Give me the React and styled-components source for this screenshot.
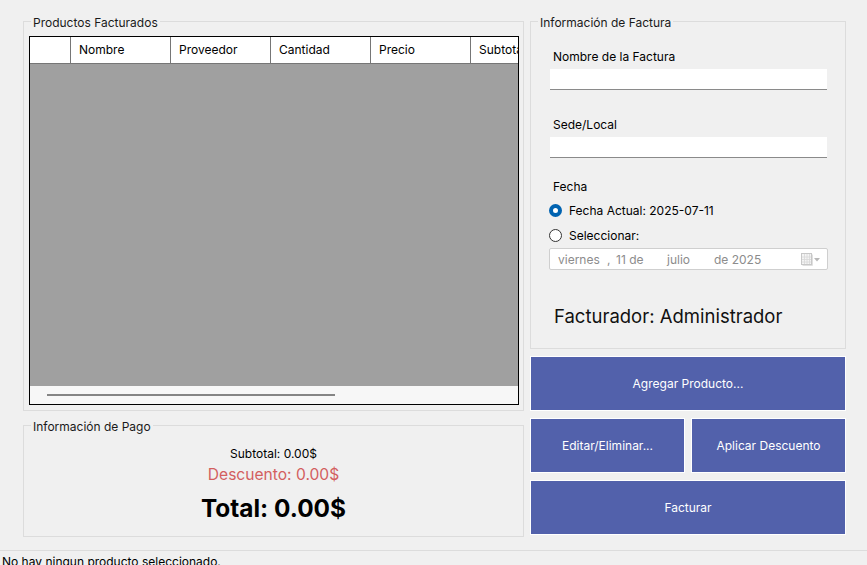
import styled, { createGlobalStyle } from 'styled-components'

const GlobalStyle = createGlobalStyle`
  html, body {
    margin: 0;
    padding: 0;
    background: #f0f0f0;
    overflow: hidden;
  }
  body {
    font-family: Inter, "Noto Sans", sans-serif;
    font-size: 12px;
    color: #1a1a1a;
  }
`

const Window = styled.div`
  width: 867px;
  height: 565px;
  display: flex;
  flex-direction: column;
  background: #f0f0f0;
`

const Main = styled.div`
  height: 550px;
  box-sizing: border-box;
  padding: 14px 21px 13px 23px;
  display: flex;
  gap: 6px;
`

const Column = styled.div`
  width: ${({ $w }) => $w}px;
  display: flex;
  flex-direction: column;
  gap: ${({ $gap }) => $gap}px;
`

const Group = styled.fieldset`
  margin: 0;
  padding: 0;
  min-width: 0;
  box-sizing: border-box;
  height: ${({ $h }) => $h}px;
  border: 1px solid #dcdcdc;
`

const Legend = styled.legend`
  padding: 0 2px;
  margin-left: 7px;
  font-size: 12px;
  line-height: 14px;
  color: #1a1a1a;

  span {
    position: relative;
    top: 2px;
  }
`

const GroupBody = styled.div`
  padding: ${({ $pad }) => $pad};
  display: flex;
  flex-direction: column;
`

const Table = styled.div`
  height: 369px;
  box-sizing: border-box;
  border: 1px solid #000;
  display: flex;
  flex-direction: column;
  overflow: hidden;
`

const HeaderRow = styled.div`
  display: grid;
  grid-template-columns: 40px repeat(5, 100px);
  height: 27px;
  flex-shrink: 0;
  box-sizing: border-box;
  border-bottom: 1px solid #767676;
  background: #fff;
`

const HeaderCell = styled.div`
  box-sizing: border-box;
  border-left: ${({ $first }) => ($first ? 'none' : '1px solid #767676')};
  padding-left: 8px;
  line-height: 26px;
  white-space: nowrap;
  overflow: hidden;
  color: #000;
`

const TableBody = styled.div`
  flex: 1;
  background: #a0a0a0;
`

const HScroll = styled.div`
  height: 18px;
  flex-shrink: 0;
  background: #f7f7f7;
  display: flex;
  align-items: center;
  padding-left: 17px;
`

const Thumb = styled.div`
  width: 288px;
  height: 2px;
  background: #858585;
`

const Totals = styled.div`
  display: flex;
  flex-direction: column;
  align-items: center;
  padding-top: 14px;
`

const Amount = styled.div`
  font-size: ${({ $size }) => $size}px;
  line-height: ${({ $lh }) => $lh}px;
  font-weight: ${({ $bold }) => ($bold ? 700 : 400)};
  color: ${({ $color }) => $color || '#000'};
  margin-top: ${({ $mt }) => $mt || 0}px;
`

const Label = styled.div`
  line-height: 16px;
  margin-left: 3px;
  margin-top: ${({ $mt }) => $mt}px;
  color: #000;
`

const Input = styled.div`
  height: 21px;
  box-sizing: border-box;
  width: 277px;
  margin-top: 4px;
  background: #fff;
  border-bottom: 1px solid #8a8a8a;
`

const RadioRow = styled.div`
  display: flex;
  align-items: center;
  gap: 7px;
  height: 18px;
  margin-left: -1px;
  margin-top: ${({ $mt }) => $mt}px;
  color: #000;
`

const Radio = styled.span`
  width: 13px;
  height: 13px;
  box-sizing: border-box;
  border-radius: 50%;
  border: ${({ $on }) => ($on ? '4px solid #0063b1' : '1px solid #333')};
  background: #fff;
`

const DateEdit = styled.div`
  width: 279px;
  height: 22px;
  box-sizing: border-box;
  margin-top: 4px;
  margin-left: -1px;
  border: 1px solid #cfcfcf;
  border-radius: 2px;
  background: #fff;
  display: flex;
  align-items: center;
  padding-left: 8px;
  color: #8c8c8c;
`

const Segment = styled.span`
  width: ${({ $w }) => $w}px;
  white-space: nowrap;
`

const CalendarBtn = styled.span`
  margin-left: auto;
  margin-right: 6px;
  display: flex;
  align-items: center;
`

const Facturador = styled.div`
  font-size: 18.5px;
  line-height: 26px;
  margin-top: 33px;
  margin-left: 4px;
  color: #111;
`

const ButtonRow = styled.div`
  display: grid;
  grid-template-columns: ${({ $split }) => ($split ? '1fr 1fr' : '1fr')};
  gap: 6px;
`

const ActionButton = styled.button`
  height: 55px;
  box-sizing: border-box;
  border: 1px solid #fff;
  background: #5261ab;
  color: #fff;
  font-family: inherit;
  font-size: 12px;
  padding: 0;
`

const StatusBar = styled.div`
  flex: 1;
  border-top: 1px solid #dcdcdc;
  padding: 3px 2px 0;
  line-height: 16px;
  color: #000;
  white-space: nowrap;
`

const columnas = ['Nombre', 'Proveedor', 'Cantidad', 'Precio', 'Subtotal']

function CalendarIcon() {
  return (
    <svg width="20" height="13" viewBox="0 0 20 13">
      <rect x="0.5" y="0.5" width="10" height="11" fill="#f4f4f4" stroke="#c8c8c8" />
      <path d="M1 4h9M1 6.5h9M1 9h9M3.5 1v10M6 1v10M8.5 1v10" stroke="#d8d8d8" strokeWidth="0.8" />
      <path d="M1.5 12.5h10V1.5" stroke="#e0e0e0" fill="none" />
      <path d="M13 5h6l-3 3.5z" fill="#b8b8b8" />
    </svg>
  )
}

export default function App() {
  return (
    <>
      <GlobalStyle />
      <Window>
        <Main>
          <Column $w={501} $gap={7}>
            <Group $h={397}>
              <Legend><span>Productos Facturados</span></Legend>
              <GroupBody $pad="8px 4px 0 5px">
                <Table>
                  <HeaderRow>
                    <HeaderCell $first />
                    {columnas.map((col) => (
                      <HeaderCell key={col}>{col}</HeaderCell>
                    ))}
                  </HeaderRow>
                  <TableBody />
                  <HScroll>
                    <Thumb />
                  </HScroll>
                </Table>
              </GroupBody>
            </Group>
            <Group $h={119}>
              <Legend><span>Información de Pago</span></Legend>
              <Totals>
                <Amount $size={12} $lh={16}>Subtotal: 0.00$</Amount>
                <Amount $size={15.6} $lh={20} $mt={3} $color="#d35f5f">Descuento: 0.00$</Amount>
                <Amount $size={24.4} $lh={28} $mt={9} $bold>Total: 0.00$</Amount>
              </Totals>
            </Group>
          </Column>

          <Column $w={316} $gap={7}>
            <Group $h={335}>
              <Legend><span>Información de Factura</span></Legend>
              <GroupBody $pad="0 18px 0 19px">
                <Label $mt={21}>Nombre de la Factura</Label>
                <Input />
                <Label $mt={27}>Sede/Local</Label>
                <Input />
                <Label $mt={21}>Fecha</Label>
                <RadioRow $mt={6}>
                  <Radio $on />
                  Fecha Actual: 2025-07-11
                </RadioRow>
                <RadioRow $mt={7}>
                  <Radio />
                  Seleccionar:
                </RadioRow>
                <DateEdit>
                  <Segment $w={49}>viernes</Segment>
                  <Segment $w={9}>,</Segment>
                  <Segment $w={51}>11 de</Segment>
                  <Segment $w={47}>julio</Segment>
                  <Segment $w={60}>de 2025</Segment>
                  <CalendarBtn>
                    <CalendarIcon />
                  </CalendarBtn>
                </DateEdit>
                <Facturador>Facturador: Administrador</Facturador>
              </GroupBody>
            </Group>
            <ButtonRow>
              <ActionButton>Agregar Producto...</ActionButton>
            </ButtonRow>
            <ButtonRow $split>
              <ActionButton>Editar/Eliminar...</ActionButton>
              <ActionButton>Aplicar Descuento</ActionButton>
            </ButtonRow>
            <ButtonRow>
              <ActionButton>Facturar</ActionButton>
            </ButtonRow>
          </Column>
        </Main>
        <StatusBar>No hay ningun producto seleccionado.</StatusBar>
      </Window>
    </>
  )
}
